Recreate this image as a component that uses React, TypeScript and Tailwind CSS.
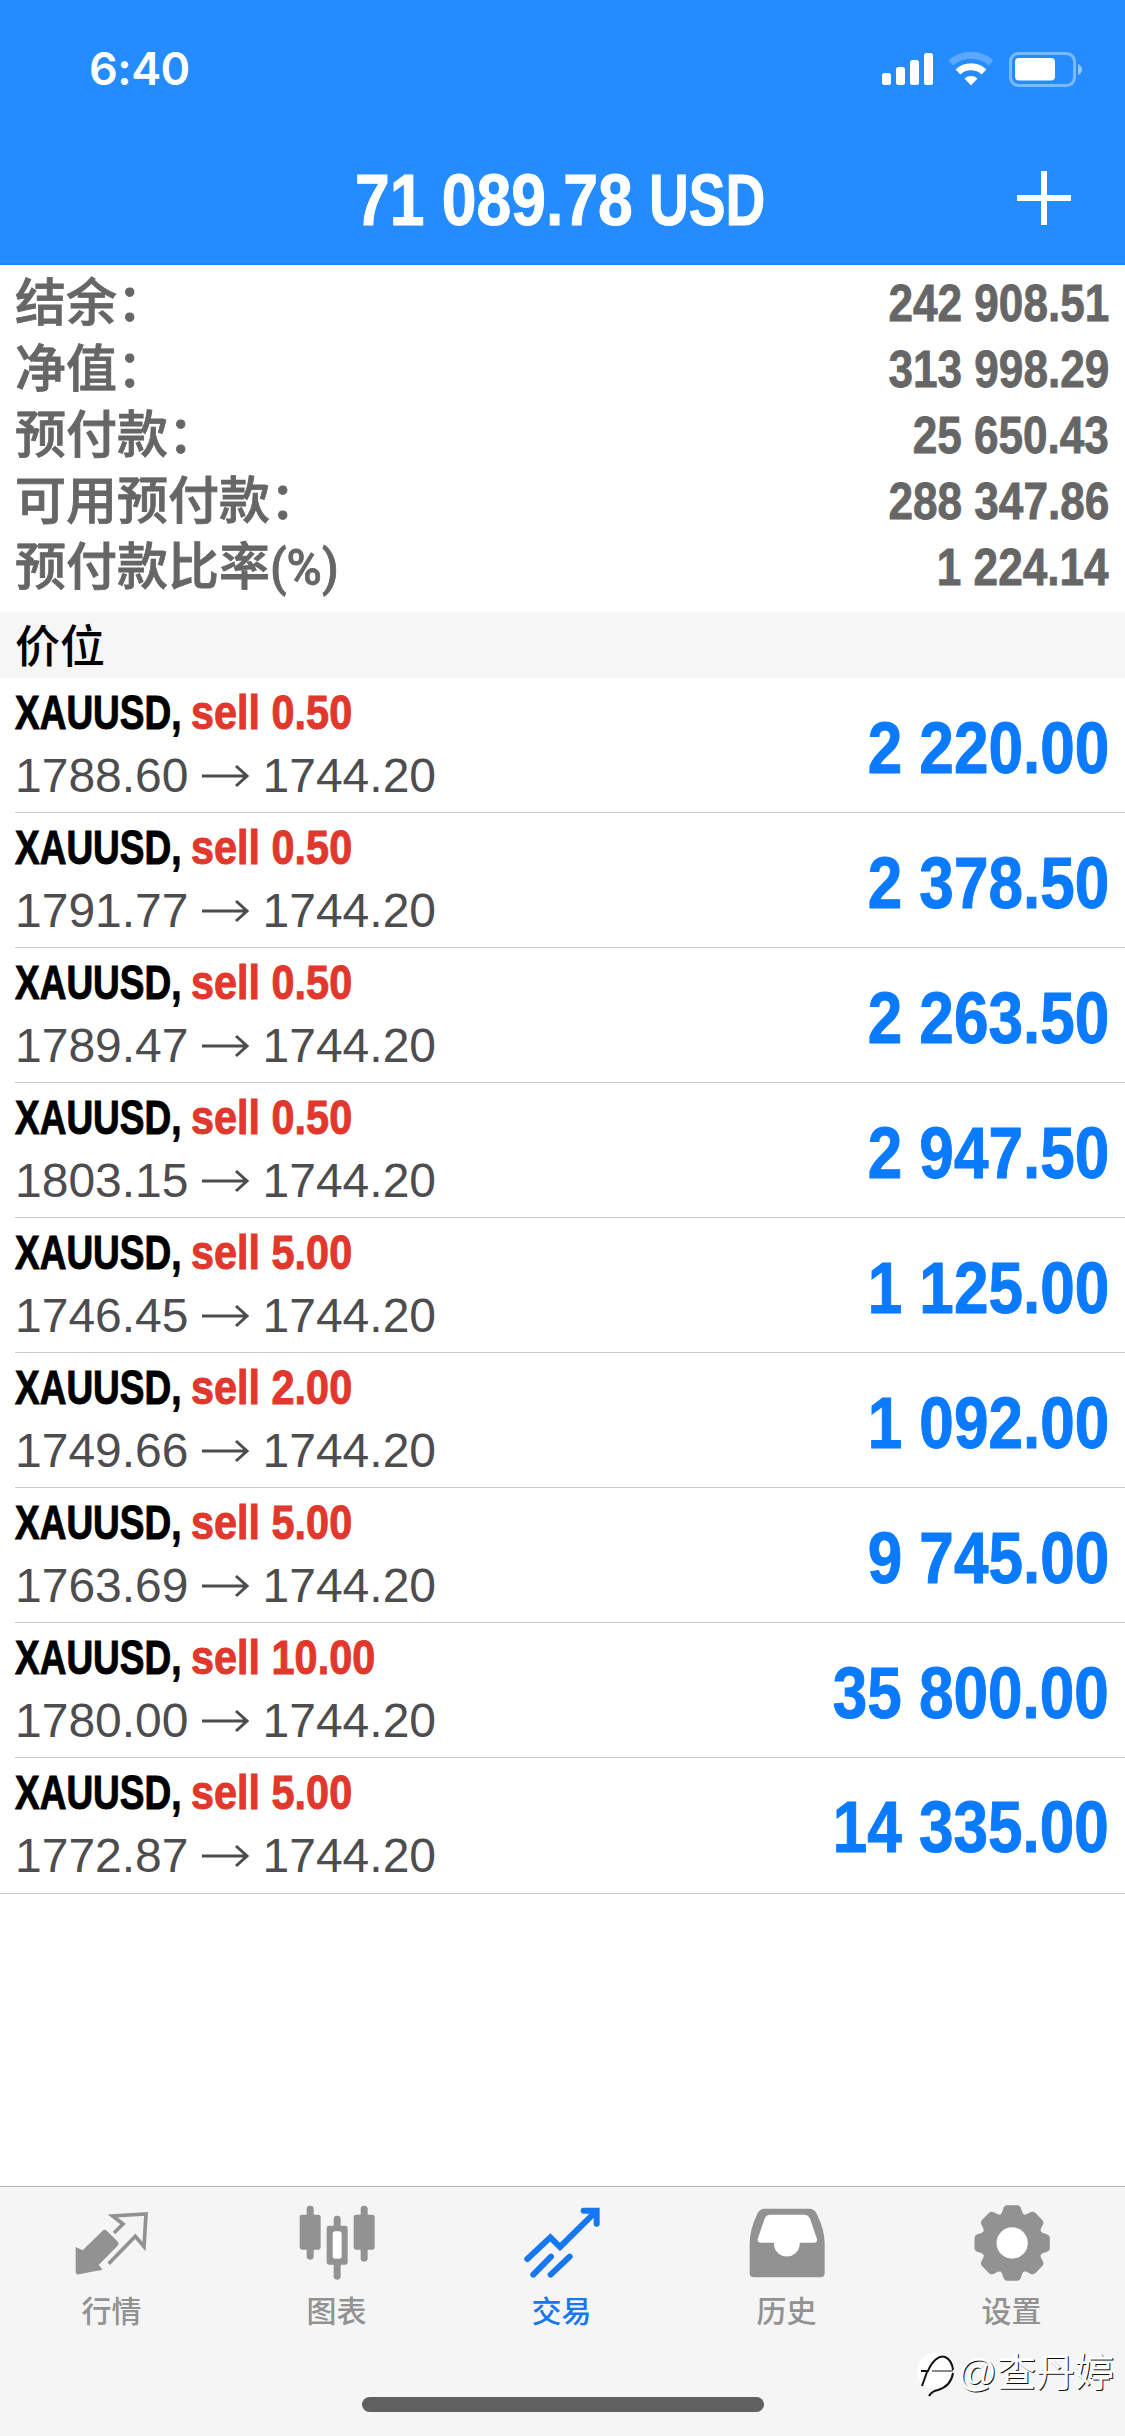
import type { ReactNode } from "react";

type Position = {
  volume: string;
  open: string;
  current: string;
  profit: string;
};

const account = [
  { label: "结余：", value: "242 908.51" },
  { label: "净值：", value: "313 998.29" },
  { label: "预付款：", value: "25 650.43" },
  { label: "可用预付款：", value: "288 347.86" },
  { label: "预付款比率", unit: "(%)", value: "1 224.14" },
];

const positions: Position[] = [
  { volume: "0.50", open: "1788.60", current: "1744.20", profit: "2 220.00" },
  { volume: "0.50", open: "1791.77", current: "1744.20", profit: "2 378.50" },
  { volume: "0.50", open: "1789.47", current: "1744.20", profit: "2 263.50" },
  { volume: "0.50", open: "1803.15", current: "1744.20", profit: "2 947.50" },
  { volume: "5.00", open: "1746.45", current: "1744.20", profit: "1 125.00" },
  { volume: "2.00", open: "1749.66", current: "1744.20", profit: "1 092.00" },
  { volume: "5.00", open: "1763.69", current: "1744.20", profit: "9 745.00" },
  { volume: "10.00", open: "1780.00", current: "1744.20", profit: "35 800.00" },
  { volume: "5.00", open: "1772.87", current: "1744.20", profit: "14 335.00" },
];

function StatusBar() {
  return (
    <div className="flex h-[132px] items-start justify-between pt-[48px] pr-[42px] pl-[89px] text-white">
      <span className="font-['Inter','Liberation_Sans',sans-serif] text-[45px] leading-[42px] font-semibold tracking-[-0.5px]">
        6:40
      </span>
      <svg width="202" height="40" viewBox="0 0 202 40" fill="currentColor">
        <rect x="1" y="25" width="9" height="12" rx="2.5" />
        <rect x="15" y="19" width="9" height="18" rx="2.5" />
        <rect x="29" y="12" width="9" height="25" rx="2.5" />
        <rect x="43" y="5" width="9" height="32" rx="2.5" />
        <path d="M70 15a30 30 0 0 1 40 0" fill="none" stroke="currentColor" strokeWidth="7" opacity="0.25" />
        <path d="M77 24a19 19 0 0 1 26 0" fill="none" stroke="currentColor" strokeWidth="7" />
        <path d="M83.500 30.500a10 10 0 0 1 13 0l-6.500 7z" />
        <rect x="129.500" y="5.500" width="64" height="32" rx="8" fill="none" stroke="currentColor" strokeWidth="3" opacity="0.4" />
        <rect x="134" y="10" width="40" height="22.500" rx="4" />
        <path d="M197 16q4 2 4 5.500t-4 5.500z" opacity="0.5" />
      </svg>
    </div>
  );
}

function NavBar() {
  return (
    <div className="grid h-[132px] grid-cols-[1fr_416px_1fr] items-center">
      <span />
      <h1 className="flex pt-[3px] font-['Liberation_Sans',sans-serif] text-[73px] leading-none font-bold whitespace-nowrap text-white [-webkit-text-stroke:1px_currentColor]">
        <span className="w-[294px] origin-left scale-x-[0.855]">71 089.78</span>
        <span className="w-[122px] origin-left scale-x-[0.755]">USD</span>
      </h1>
      <button type="button" aria-label="新订单" className="mr-[54px] justify-self-end">
        <svg width="54" height="54" viewBox="0 0 54 54" stroke="white" strokeWidth="6">
          <path d="M27 0v54M0 27h54" />
        </svg>
      </button>
    </div>
  );
}

function AccountSummary() {
  return (
    <dl className="h-[347px] pt-[6px] pr-4 pl-[15px]">
      {account.map((row) => (
        <div key={row.label} className="flex h-[66px] items-center justify-between text-[#666]">
          <dt className="flex items-center font-['Liberation_Sans','Noto_Sans_CJK_SC',sans-serif] text-[51px] leading-[60px] font-medium [-webkit-text-stroke:0.8px_currentColor]">
            {row.label}
            {row.unit && (
              <span className="origin-left scale-x-[0.96] font-['Roboto','Liberation_Sans',sans-serif] text-[50px]">
                {row.unit}
              </span>
            )}
          </dt>
          <dd className="origin-right scale-x-[0.865] pb-[1px] font-['Liberation_Sans',sans-serif] text-[51px] leading-none font-bold [-webkit-text-stroke:0.8px_currentColor]">
            {row.value}
          </dd>
        </div>
      ))}
    </dl>
  );
}

function PositionRow({ position }: { position: Position }) {
  return (
    <li className="ml-[15px] flex h-[135px] items-center justify-between border-b border-[#c8c7cc] pr-4 last:ml-0 last:h-[136px] last:pb-[2px] last:pl-[15px]">
      <div>
        <p className="-mt-[1px] mb-[1px] flex font-['Liberation_Sans',sans-serif] text-[49px] leading-[62px] font-bold whitespace-nowrap [-webkit-text-stroke:1px_currentColor]">
          <span className="w-[176px] origin-left scale-x-[0.755] text-black">XAUUSD,</span>
          <span className="origin-left scale-x-[0.845] text-[#e0382c]">sell {position.volume}</span>
        </p>
        <p className="flex items-center font-['Liberation_Sans',sans-serif] text-[48px] leading-[64px] text-[#4d4d50]">
          {position.open}
          <svg className="mr-[14px] ml-[13px]" width="47" height="24" viewBox="0 0 47 24" fill="none" stroke="currentColor" strokeWidth="3">
            <path d="M0 12h45M34 2l11 10-11 10" />
          </svg>
          {position.current}
        </p>
      </div>
      <span className="origin-right scale-x-[0.85] pt-[4px] font-['Liberation_Sans',sans-serif] text-[73px] leading-none font-bold text-[#0a7aff] [-webkit-text-stroke:1px_currentColor]">
        {position.profit}
      </span>
    </li>
  );
}

function QuotesIcon() {
  return (
    <>
      <path
        d="M8 132 29 142 88 84q7-7 14 0l31 31q7 7 0 14L77 186l12 14-71 14q-10 2-10-9z"
        fill="currentColor"
      />
      <path d="M123 90l27-27-31-24 100-6-6 98-26-31-80 82" fill="none" stroke="currentColor" strokeWidth="11" />
    </>
  );
}

function ChartIcon() {
  return (
    <g fill="currentColor">
      <rect x="5" y="35" width="63" height="105" rx="7" />
      <rect x="26" y="8" width="21" height="162" rx="10" />
      <rect x="86" y="68" width="63" height="117" rx="7" />
      <rect x="107" y="38" width="21" height="192" rx="10" />
      <rect x="104" y="85" width="27" height="82" rx="8" fill="white" />
      <rect x="167" y="35" width="63" height="105" rx="7" />
      <rect x="188" y="8" width="21" height="168" rx="10" />
    </g>
  );
}

function TradeIcon() {
  return (
    <g fill="none" stroke="currentColor" strokeWidth="18" strokeLinecap="round">
      <path d="M13 168 82 103l29 29L219 25M182 23h39v39" />
      <path d="M31 215l53-54M83 215l57-54" />
    </g>
  );
}

function HistoryIcon() {
  return (
    <>
      <path
        d="M5 120Q5 80 28 32 35 17 50 17h134q15 0 22 15 24 48 24 88v90q0 13-13 13H18q-13 0-13-13z"
        fill="currentColor"
      />
      <path
        d="M66 35h102q13 0 18 12l20 58q4 14-8 14h-43v9a39 39 0 0 1-77 0v-9H38q-12 0-8-14l20-58q5-12 16-12z"
        fill="white"
      />
    </>
  );
}

const teeth = [0, 45, 90, 135, 180, 225, 270, 315];

function SettingsIcon() {
  return (
    <g transform="translate(117.500 120)" fill="currentColor">
      <circle r="91" />
      {teeth.map((angle) => (
        <path key={angle} transform={`rotate(${angle})`} d="M-38-82Q-30-88-27-102-24-113-15-113h30q9 0 12 11 3 14 11 20z" />
      ))}
      <circle r="47" fill="white" />
    </g>
  );
}

const tabs: { label: string; icon: ReactNode; active?: boolean }[] = [
  { label: "行情", icon: <QuotesIcon /> },
  { label: "图表", icon: <ChartIcon /> },
  { label: "交易", icon: <TradeIcon />, active: true },
  { label: "历史", icon: <HistoryIcon /> },
  { label: "设置", icon: <SettingsIcon /> },
];

function Watermark() {
  return (
    <div className="absolute right-[11px] bottom-[39px] flex items-center text-white">
      <svg width="42" height="48" viewBox="0 0 42 48">
        <circle cx="20" cy="22" r="18" fill="white" />
        <g fill="none" stroke="#111">
          <path d="M6 22h7C17 12 24 6 30 8q7 3 8 13M12 23 7 37M38 24q-2 13-15 17-6 1-9 6" strokeWidth="2" />
          <path d="M17 22h21" />
        </g>
      </svg>
      <span className="font-['Liberation_Sans','Noto_Sans_CJK_SC',sans-serif] text-[39px] leading-[48px] [text-shadow:1px_1px_0_#111]">
        @查丹婷
      </span>
    </div>
  );
}

function TabBar() {
  return (
    <nav className="relative flex h-[250px] flex-col border-t border-[#b2b2b2] bg-[#f5f5f5]">
      <div className="grid grid-cols-5 pt-[16px]">
        {tabs.map((tab) => (
          <a
            key={tab.label}
            className={
              tab.active ? "flex flex-col items-center text-[#1677f0]" : "flex flex-col items-center text-[#929292]"
            }
          >
            <svg width="80" height="80" viewBox="0 0 240 240">
              {tab.icon}
            </svg>
            <span className="mt-[4px] mr-[2px] font-['Noto_Sans_CJK_SC',sans-serif] text-[30px] leading-[44px] font-medium">
              {tab.label}
            </span>
          </a>
        ))}
      </div>
      <div className="mx-auto mt-auto mb-6 h-[15px] w-[402px] rounded-full bg-[#606060]" />
      <Watermark />
    </nav>
  );
}

export default function App() {
  return (
    <div className="flex h-[2436px] w-[1125px] flex-col overflow-hidden bg-white">
      <header className="h-[265px] border-b-2 border-[#1a84fb] bg-[#258cff]">
        <StatusBar />
        <NavBar />
      </header>
      <main className="flex-1">
        <AccountSummary />
        <h2 className="h-[66px] bg-[#f6f6f6] px-[15px] font-['Noto_Sans_CJK_SC',sans-serif] text-[45px] leading-[64px] font-medium text-black">
          价位
        </h2>
        <ul>
          {positions.map((position) => (
            <PositionRow key={position.open} position={position} />
          ))}
        </ul>
      </main>
      <TabBar />
    </div>
  );
}
